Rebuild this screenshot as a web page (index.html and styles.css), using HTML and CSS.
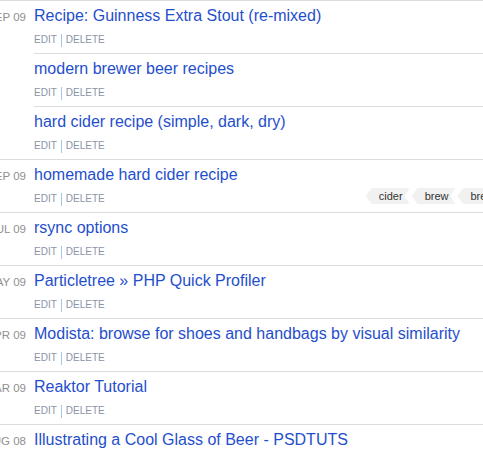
FILE: index.html
```html
<!DOCTYPE html>
<html>
<head>
<meta charset="utf-8">
<link rel="stylesheet" href="styles.css">
</head>
<body>
<div class="page">
  <ul class="groups">
    <li class="group">
      <div class="date">SEP 09</div>
      <ul class="entries">
        <li class="entry">
          <a class="title" href="#">Recipe: Guinness Extra Stout (re-mixed)</a>
          <div class="actions"><a href="#">EDIT</a><span class="sep"></span><a href="#">DELETE</a></div>
        </li>
        <li class="entry">
          <a class="title" href="#">modern brewer beer recipes</a>
          <div class="actions"><a href="#">EDIT</a><span class="sep"></span><a href="#">DELETE</a></div>
        </li>
        <li class="entry">
          <a class="title" href="#">hard cider recipe (simple, dark, dry)</a>
          <div class="actions"><a href="#">EDIT</a><span class="sep"></span><a href="#">DELETE</a></div>
        </li>
      </ul>
    </li>
    <li class="group">
      <div class="date">SEP 09</div>
      <ul class="entries">
        <li class="entry">
          <a class="title" href="#">homemade hard cider recipe</a>
          <div class="actions"><a href="#">EDIT</a><span class="sep"></span><a href="#">DELETE</a>
            <ul class="tags"><li class="tag">cider</li><li class="tag">brew</li><li class="tag">brewing</li></ul>
          </div>
        </li>
      </ul>
    </li>
    <li class="group">
      <div class="date">JUL 09</div>
      <ul class="entries">
        <li class="entry">
          <a class="title" href="#">rsync options</a>
          <div class="actions"><a href="#">EDIT</a><span class="sep"></span><a href="#">DELETE</a></div>
        </li>
      </ul>
    </li>
    <li class="group">
      <div class="date">MAY 09</div>
      <ul class="entries">
        <li class="entry">
          <a class="title" href="#">Particletree » PHP Quick Profiler</a>
          <div class="actions"><a href="#">EDIT</a><span class="sep"></span><a href="#">DELETE</a></div>
        </li>
      </ul>
    </li>
    <li class="group">
      <div class="date">APR 09</div>
      <ul class="entries">
        <li class="entry">
          <a class="title" href="#">Modista: browse for shoes and handbags by visual similarity</a>
          <div class="actions"><a href="#">EDIT</a><span class="sep"></span><a href="#">DELETE</a></div>
        </li>
      </ul>
    </li>
    <li class="group">
      <div class="date">MAR 09</div>
      <ul class="entries">
        <li class="entry">
          <a class="title" href="#">Reaktor Tutorial</a>
          <div class="actions"><a href="#">EDIT</a><span class="sep"></span><a href="#">DELETE</a></div>
        </li>
      </ul>
    </li>
    <li class="group">
      <div class="date">AUG 08</div>
      <ul class="entries">
        <li class="entry">
          <a class="title" href="#">Illustrating a Cool Glass of Beer - PSDTUTS</a>
          <div class="actions"><a href="#">EDIT</a><span class="sep"></span><a href="#">DELETE</a></div>
        </li>
      </ul>
    </li>
  </ul>
</div>
</body>
</html>
```

FILE: styles.css
```css
html, body {
  margin: 0;
  padding: 0;
  overflow: hidden;
  background: #fff;
}
body {
  font-family: "Liberation Sans", Arial, sans-serif;
}
.page {
  width: 580px;
  margin-left: -20px;
}
ul {
  list-style: none;
  margin: 0;
  padding: 0;
}
.group {
  display: flex;
  align-items: baseline;
  border-top: 1px solid #dcdcdc;
}
.date {
  flex: 0 0 54px;
  box-sizing: border-box;
  padding-right: 8px;
  text-align: right;
  white-space: nowrap;
  font-size: 11.5px;
  color: #8f8f8f;
}
.entries {
  flex: 1 1 auto;
  min-width: 0;
}
.entry {
  padding: 5px 0 6px;
}
.entry + .entry {
  border-top: 1px solid #dcdcdc;
}
.title {
  display: block;
  font-size: 16px;
  line-height: 20px;
  color: #1f4fcc;
  text-decoration: none;
  white-space: nowrap;
}
.actions {
  display: flex;
  align-items: center;
  margin-top: 7px;
  height: 14px;
  font-size: 10px;
  line-height: 14px;
}
.actions a {
  color: #8a94a8;
  text-decoration: none;
}
.sep {
  width: 1px;
  height: 13px;
  background: #a9c4ea;
  margin: 0 4px;
}
.tags {
  display: flex;
  margin-left: auto;
  margin-right: 44px;
  margin-top: -6px;
  gap: 2px;
}
.tag {
  background: #f1f1f1;
  color: #333;
  font-size: 11px;
  line-height: 16px;
  height: 16px;
  padding: 0 7px 0 13px;
  clip-path: polygon(6px 0, 100% 0, calc(100% - 5px) 50%, 100% 100%, 6px 100%, 0 50%);
}
```
